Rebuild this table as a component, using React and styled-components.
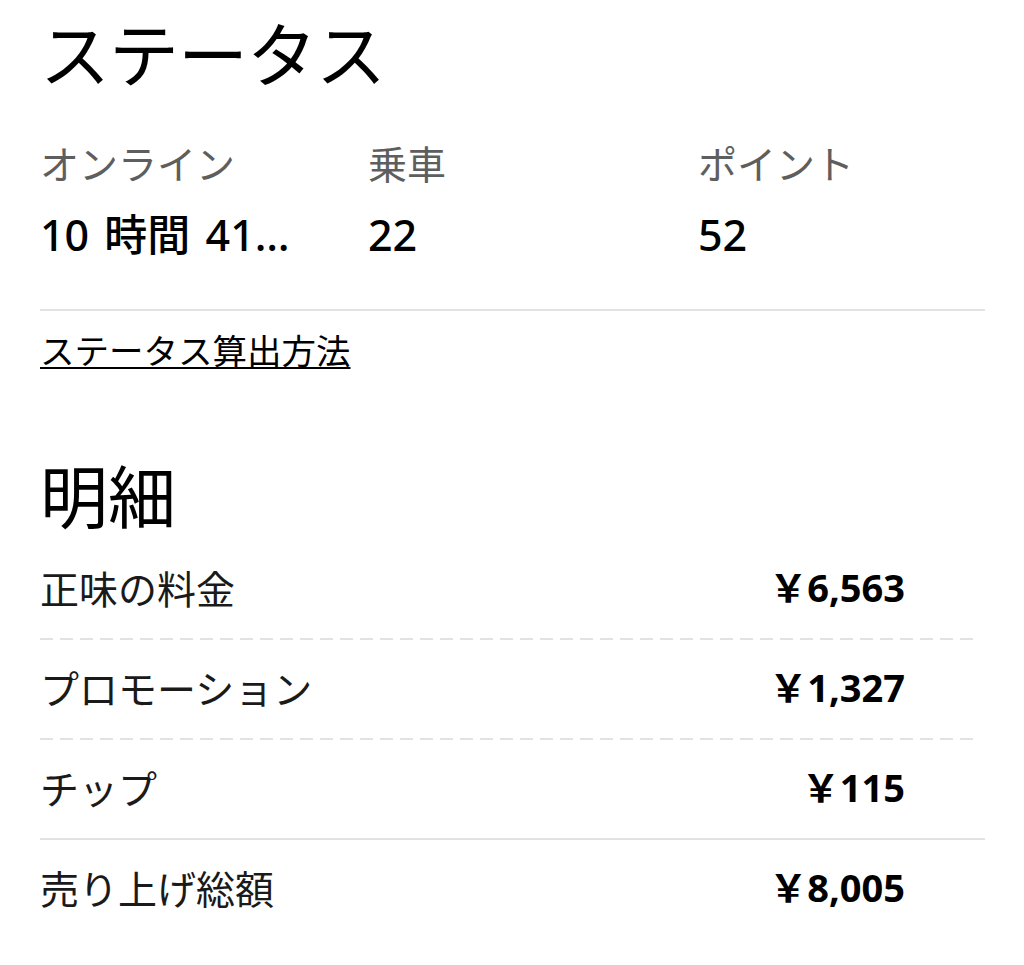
import React from "react";
import styled, { createGlobalStyle } from "styled-components";

const GlobalStyle = createGlobalStyle`
  body {
    margin: 0;
    background: #ffffff;
    font-family: "Noto Sans", "Noto Sans CJK JP", sans-serif;
    color: #000000;
  }
`;

const stats = [
  { label: "オンライン", value: "10 時間 41 分", truncate: true },
  { label: "乗車", value: "22" },
  { label: "ポイント", value: "52" },
];

const breakdown = [
  { label: "正味の料金", amount: "￥6,563", line: "dashed" },
  { label: "プロモーション", amount: "￥1,327", line: "dashed" },
  { label: "チップ", amount: "￥115", line: "solid" },
  { label: "売り上げ総額", amount: "￥8,005", line: "none" },
];

const App = () => {
  return (
    <Page>
      <GlobalStyle />
      <Heading>ステータス</Heading>
      <StatGrid>
        {stats.map((stat) => (
          <StatItem key={stat.label}>
            <StatLabel>{stat.label}</StatLabel>
            <StatValue $truncate={stat.truncate}>{stat.value}</StatValue>
          </StatItem>
        ))}
      </StatGrid>
      <Divider />
      <HelpLink href="#">ステータス算出方法</HelpLink>

      <BreakdownHeading>明細</BreakdownHeading>
      <RowList>
        {breakdown.map((row) => (
          <Row key={row.label} $line={row.line}>
            <RowLabel>{row.label}</RowLabel>
            <Amount>{row.amount}</Amount>
          </Row>
        ))}
      </RowList>
    </Page>
  );
};

const Page = styled.div`
  display: flex;
  flex-direction: column;
  align-items: flex-start;
  padding: 12px 39px 40px 40px;
`;

const Heading = styled.h1`
  margin: 0;
  font-family: "Noto Sans CJK JP", sans-serif;
  font-size: 70px;
  font-weight: 400;
  line-height: 80px;
  letter-spacing: -1px;
`;

const StatGrid = styled.div`
  display: grid;
  grid-template-columns: 328px 330px 1fr;
  width: 100%;
  margin-top: 46px;
`;

const StatItem = styled.div`
  display: flex;
  flex-direction: column;
  gap: 21px;
  min-width: 0;
`;

const StatLabel = styled.div`
  font-family: "Noto Sans CJK JP", sans-serif;
  font-size: 39px;
  line-height: 48px;
  color: #5e5e5e;
`;

const StatValue = styled.div`
  font-family: "Noto Sans", "Noto Sans CJK JP", sans-serif;
  font-size: 43px;
  font-weight: 500;
  line-height: 56px;
  word-spacing: 4px;
  white-space: nowrap;
  ${({ $truncate }) =>
    $truncate &&
    `
    max-width: 262px;
    overflow: hidden;
    text-overflow: ellipsis;
  `}
`;

const Divider = styled.div`
  width: 100%;
  height: 2px;
  margin-top: 46px;
  background: #e2e2e2;
`;

const HelpLink = styled.a`
  margin-top: 16px;
  font-family: "Noto Sans CJK JP", sans-serif;
  font-size: 34.5px;
  line-height: 44px;
  color: #000000;
  text-decoration: underline;
  text-decoration-thickness: 2px;
  text-underline-offset: 3px;
`;

const BreakdownHeading = styled.h2`
  margin: 83px 0 0;
  font-family: "Noto Sans CJK JP", sans-serif;
  font-size: 68px;
  font-weight: 400;
  line-height: 80px;
`;

const RowList = styled.div`
  display: flex;
  flex-direction: column;
  width: 100%;
  margin-top: 6px;
`;

const Row = styled.div`
  display: flex;
  align-items: center;
  justify-content: space-between;
  box-sizing: border-box;
  height: 100px;
  padding: 0 80px 6px 0;
  background-repeat: no-repeat;
  background-position: left bottom;
  background-size: ${({ $line }) => ($line === "dashed" ? "99.5% 2px" : "100% 2px")};
  background-image: ${({ $line }) =>
    $line === "dashed"
      ? "repeating-linear-gradient(90deg, #e2e2e2 0 13px, transparent 13px 20px)"
      : $line === "solid"
      ? "linear-gradient(#e2e2e2, #e2e2e2)"
      : "none"};
`;

const RowLabel = styled.div`
  font-family: "Noto Sans CJK JP", sans-serif;
  font-size: 39px;
  line-height: 48px;
  color: #1a1a1a;
`;

const Amount = styled.div`
  font-family: "Noto Sans", "Noto Sans CJK JP", sans-serif;
  font-size: 38px;
  font-weight: 700;
  line-height: 48px;
`;

export default App;
